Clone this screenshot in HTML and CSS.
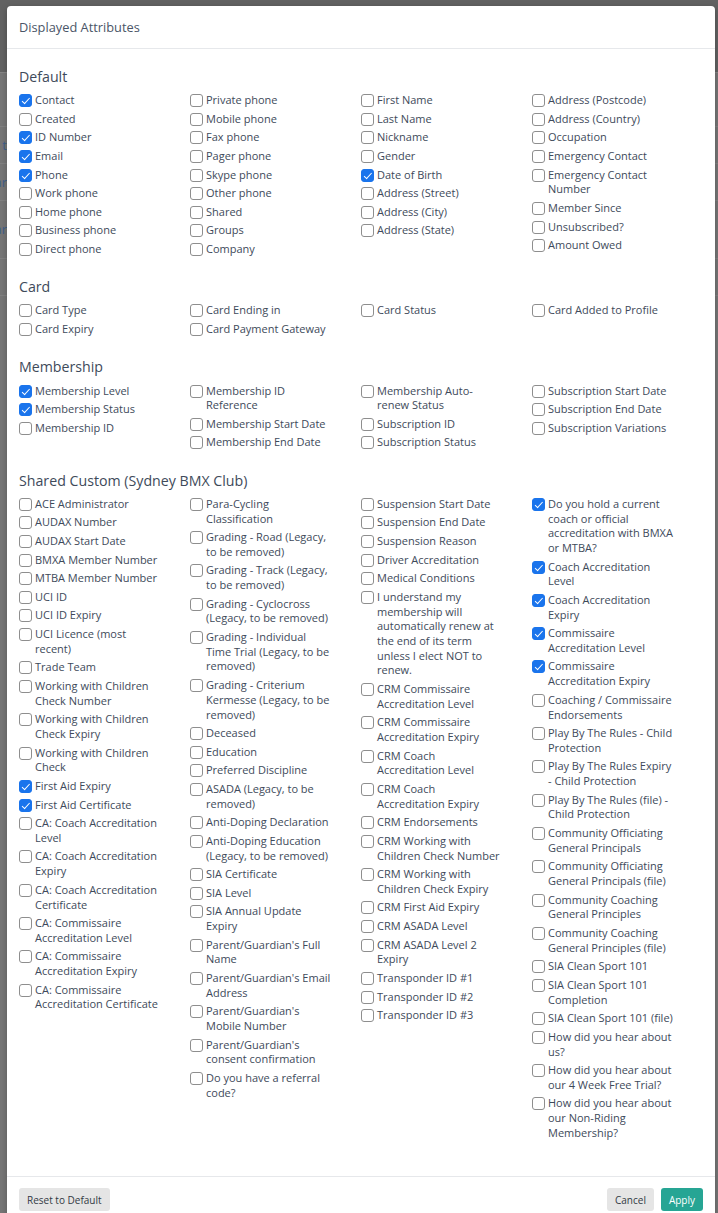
FILE: index.html
```html
<!DOCTYPE html>
<html>
<head>
<meta charset="utf-8">
<title>Displayed Attributes</title>
<link rel="stylesheet" href="styles.css">
</head>
<body>
<div class="page">
  <div class="page-top"></div>
  <div class="page-row page-row-tall"></div>
  <div class="page-row"><span class="page-link">t</span></div>
  <div class="page-row"><span class="page-link">ar</span></div>
  <div class="page-row page-row-big"><span class="page-link">ar</span></div>
  <div class="page-row"></div>
</div>

<div class="modal">
  <div class="modal-header">Displayed Attributes</div>
  <div class="modal-body">

    <section class="group">
      <h3 class="group-title">Default</h3>
      <div class="cols">
        <div class="col">
          <label class="item"><input type="checkbox" checked><span>Contact</span></label>
          <label class="item"><input type="checkbox"><span>Created</span></label>
          <label class="item"><input type="checkbox" checked><span>ID Number</span></label>
          <label class="item"><input type="checkbox" checked><span>Email</span></label>
          <label class="item"><input type="checkbox" checked><span>Phone</span></label>
          <label class="item"><input type="checkbox"><span>Work phone</span></label>
          <label class="item"><input type="checkbox"><span>Home phone</span></label>
          <label class="item"><input type="checkbox"><span>Business phone</span></label>
          <label class="item"><input type="checkbox"><span>Direct phone</span></label>
        </div>
        <div class="col">
          <label class="item"><input type="checkbox"><span>Private phone</span></label>
          <label class="item"><input type="checkbox"><span>Mobile phone</span></label>
          <label class="item"><input type="checkbox"><span>Fax phone</span></label>
          <label class="item"><input type="checkbox"><span>Pager phone</span></label>
          <label class="item"><input type="checkbox"><span>Skype phone</span></label>
          <label class="item"><input type="checkbox"><span>Other phone</span></label>
          <label class="item"><input type="checkbox"><span>Shared</span></label>
          <label class="item"><input type="checkbox"><span>Groups</span></label>
          <label class="item"><input type="checkbox"><span>Company</span></label>
        </div>
        <div class="col">
          <label class="item"><input type="checkbox"><span>First Name</span></label>
          <label class="item"><input type="checkbox"><span>Last Name</span></label>
          <label class="item"><input type="checkbox"><span>Nickname</span></label>
          <label class="item"><input type="checkbox"><span>Gender</span></label>
          <label class="item"><input type="checkbox" checked><span>Date of Birth</span></label>
          <label class="item"><input type="checkbox"><span>Address (Street)</span></label>
          <label class="item"><input type="checkbox"><span>Address (City)</span></label>
          <label class="item"><input type="checkbox"><span>Address (State)</span></label>
        </div>
        <div class="col">
          <label class="item"><input type="checkbox"><span>Address (Postcode)</span></label>
          <label class="item"><input type="checkbox"><span>Address (Country)</span></label>
          <label class="item"><input type="checkbox"><span>Occupation</span></label>
          <label class="item"><input type="checkbox"><span>Emergency Contact</span></label>
          <label class="item"><input type="checkbox"><span>Emergency Contact Number</span></label>
          <label class="item"><input type="checkbox"><span>Member Since</span></label>
          <label class="item"><input type="checkbox"><span>Unsubscribed?</span></label>
          <label class="item"><input type="checkbox"><span>Amount Owed</span></label>
        </div>
      </div>
    </section>

    <section class="group">
      <h3 class="group-title">Card</h3>
      <div class="cols">
        <div class="col">
          <label class="item"><input type="checkbox"><span>Card Type</span></label>
          <label class="item"><input type="checkbox"><span>Card Expiry</span></label>
        </div>
        <div class="col">
          <label class="item"><input type="checkbox"><span>Card Ending in</span></label>
          <label class="item"><input type="checkbox"><span>Card Payment Gateway</span></label>
        </div>
        <div class="col">
          <label class="item"><input type="checkbox"><span>Card Status</span></label>
        </div>
        <div class="col">
          <label class="item"><input type="checkbox"><span>Card Added to Profile</span></label>
        </div>
      </div>
    </section>

    <section class="group">
      <h3 class="group-title">Membership</h3>
      <div class="cols">
        <div class="col">
          <label class="item"><input type="checkbox" checked><span>Membership Level</span></label>
          <label class="item"><input type="checkbox" checked><span>Membership Status</span></label>
          <label class="item"><input type="checkbox"><span>Membership ID</span></label>
        </div>
        <div class="col">
          <label class="item"><input type="checkbox"><span>Membership ID Reference</span></label>
          <label class="item"><input type="checkbox"><span>Membership Start Date</span></label>
          <label class="item"><input type="checkbox"><span>Membership End Date</span></label>
        </div>
        <div class="col">
          <label class="item"><input type="checkbox"><span>Membership Auto-renew Status</span></label>
          <label class="item"><input type="checkbox"><span>Subscription ID</span></label>
          <label class="item"><input type="checkbox"><span>Subscription Status</span></label>
        </div>
        <div class="col">
          <label class="item"><input type="checkbox"><span>Subscription Start Date</span></label>
          <label class="item"><input type="checkbox"><span>Subscription End Date</span></label>
          <label class="item"><input type="checkbox"><span>Subscription Variations</span></label>
        </div>
      </div>
    </section>

    <section class="group">
      <h3 class="group-title">Shared Custom (Sydney BMX Club)</h3>
      <div class="cols">
        <div class="col">
          <label class="item"><input type="checkbox"><span>ACE Administrator</span></label>
          <label class="item"><input type="checkbox"><span>AUDAX Number</span></label>
          <label class="item"><input type="checkbox"><span>AUDAX Start Date</span></label>
          <label class="item"><input type="checkbox"><span>BMXA Member Number</span></label>
          <label class="item"><input type="checkbox"><span>MTBA Member Number</span></label>
          <label class="item"><input type="checkbox"><span>UCI ID</span></label>
          <label class="item"><input type="checkbox"><span>UCI ID Expiry</span></label>
          <label class="item"><input type="checkbox"><span>UCI Licence (most recent)</span></label>
          <label class="item"><input type="checkbox"><span>Trade Team</span></label>
          <label class="item"><input type="checkbox"><span>Working with Children Check Number</span></label>
          <label class="item"><input type="checkbox"><span>Working with Children Check Expiry</span></label>
          <label class="item"><input type="checkbox"><span>Working with Children Check</span></label>
          <label class="item"><input type="checkbox" checked><span>First Aid Expiry</span></label>
          <label class="item"><input type="checkbox" checked><span>First Aid Certificate</span></label>
          <label class="item"><input type="checkbox"><span>CA: Coach Accreditation Level</span></label>
          <label class="item"><input type="checkbox"><span>CA: Coach Accreditation Expiry</span></label>
          <label class="item"><input type="checkbox"><span>CA: Coach Accreditation Certificate</span></label>
          <label class="item"><input type="checkbox"><span>CA: Commissaire Accreditation Level</span></label>
          <label class="item"><input type="checkbox"><span>CA: Commissaire Accreditation Expiry</span></label>
          <label class="item"><input type="checkbox"><span>CA: Commissaire Accreditation Certificate</span></label>
        </div>
        <div class="col">
          <label class="item"><input type="checkbox"><span>Para-Cycling Classification</span></label>
          <label class="item"><input type="checkbox"><span>Grading - Road (Legacy, to be removed)</span></label>
          <label class="item"><input type="checkbox"><span>Grading - Track (Legacy, to be removed)</span></label>
          <label class="item"><input type="checkbox"><span>Grading - Cyclocross (Legacy, to be removed)</span></label>
          <label class="item"><input type="checkbox"><span>Grading - Individual Time Trial (Legacy, to be removed)</span></label>
          <label class="item"><input type="checkbox"><span>Grading - Criterium Kermesse (Legacy, to be removed)</span></label>
          <label class="item"><input type="checkbox"><span>Deceased</span></label>
          <label class="item"><input type="checkbox"><span>Education</span></label>
          <label class="item"><input type="checkbox"><span>Preferred Discipline</span></label>
          <label class="item"><input type="checkbox"><span>ASADA (Legacy, to be removed)</span></label>
          <label class="item"><input type="checkbox"><span>Anti-Doping Declaration</span></label>
          <label class="item"><input type="checkbox"><span>Anti-Doping Education (Legacy, to be removed)</span></label>
          <label class="item"><input type="checkbox"><span>SIA Certificate</span></label>
          <label class="item"><input type="checkbox"><span>SIA Level</span></label>
          <label class="item"><input type="checkbox"><span>SIA Annual Update Expiry</span></label>
          <label class="item"><input type="checkbox"><span>Parent/Guardian's Full Name</span></label>
          <label class="item"><input type="checkbox"><span>Parent/Guardian's Email Address</span></label>
          <label class="item"><input type="checkbox"><span>Parent/Guardian's Mobile Number</span></label>
          <label class="item"><input type="checkbox"><span>Parent/Guardian's consent confirmation</span></label>
          <label class="item"><input type="checkbox"><span>Do you have a referral code?</span></label>
        </div>
        <div class="col">
          <label class="item"><input type="checkbox"><span>Suspension Start Date</span></label>
          <label class="item"><input type="checkbox"><span>Suspension End Date</span></label>
          <label class="item"><input type="checkbox"><span>Suspension Reason</span></label>
          <label class="item"><input type="checkbox"><span>Driver Accreditation</span></label>
          <label class="item"><input type="checkbox"><span>Medical Conditions</span></label>
          <label class="item"><input type="checkbox"><span>I understand my membership will automatically renew at the end of its term unless I elect NOT to renew.</span></label>
          <label class="item"><input type="checkbox"><span>CRM Commissaire Accreditation Level</span></label>
          <label class="item"><input type="checkbox"><span>CRM Commissaire Accreditation Expiry</span></label>
          <label class="item"><input type="checkbox"><span>CRM Coach Accreditation Level</span></label>
          <label class="item"><input type="checkbox"><span>CRM Coach Accreditation Expiry</span></label>
          <label class="item"><input type="checkbox"><span>CRM Endorsements</span></label>
          <label class="item"><input type="checkbox"><span>CRM Working with Children Check Number</span></label>
          <label class="item"><input type="checkbox"><span>CRM Working with Children Check Expiry</span></label>
          <label class="item"><input type="checkbox"><span>CRM First Aid Expiry</span></label>
          <label class="item"><input type="checkbox"><span>CRM ASADA Level</span></label>
          <label class="item"><input type="checkbox"><span>CRM ASADA Level 2 Expiry</span></label>
          <label class="item"><input type="checkbox"><span>Transponder ID #1</span></label>
          <label class="item"><input type="checkbox"><span>Transponder ID #2</span></label>
          <label class="item"><input type="checkbox"><span>Transponder ID #3</span></label>
        </div>
        <div class="col">
          <label class="item"><input type="checkbox" checked><span>Do you hold a current coach or official accreditation with BMXA or MTBA?</span></label>
          <label class="item"><input type="checkbox" checked><span>Coach Accreditation Level</span></label>
          <label class="item"><input type="checkbox" checked><span>Coach Accreditation Expiry</span></label>
          <label class="item"><input type="checkbox" checked><span>Commissaire Accreditation Level</span></label>
          <label class="item"><input type="checkbox" checked><span>Commissaire Accreditation Expiry</span></label>
          <label class="item"><input type="checkbox"><span>Coaching / Commissaire Endorsements</span></label>
          <label class="item"><input type="checkbox"><span>Play By The Rules - Child Protection</span></label>
          <label class="item"><input type="checkbox"><span>Play By The Rules Expiry - Child Protection</span></label>
          <label class="item"><input type="checkbox"><span>Play By The Rules (file) - Child Protection</span></label>
          <label class="item"><input type="checkbox"><span>Community Officiating General Principals</span></label>
          <label class="item"><input type="checkbox"><span>Community Officiating General Principals (file)</span></label>
          <label class="item"><input type="checkbox"><span>Community Coaching General Principles</span></label>
          <label class="item"><input type="checkbox"><span>Community Coaching General Principles (file)</span></label>
          <label class="item"><input type="checkbox"><span>SIA Clean Sport 101</span></label>
          <label class="item"><input type="checkbox"><span>SIA Clean Sport 101 Completion</span></label>
          <label class="item"><input type="checkbox"><span>SIA Clean Sport 101 (file)</span></label>
          <label class="item"><input type="checkbox"><span>How did you hear about us?</span></label>
          <label class="item"><input type="checkbox"><span>How did you hear about our 4 Week Free Trial?</span></label>
          <label class="item"><input type="checkbox"><span>How did you hear about our Non-Riding Membership?</span></label>
        </div>
      </div>
    </section>

  </div>
  <div class="modal-footer">
    <button class="btn btn-light" type="button">Reset to Default</button>
    <div class="footer-right">
      <button class="btn btn-light" type="button">Cancel</button>
      <button class="btn btn-primary" type="button">Apply</button>
    </div>
  </div>
</div>
</body>
</html>
```

FILE: styles.css
```css
html, body {
  margin: 0;
  padding: 0;
  height: 100%;
  overflow: hidden;
}

body {
  background: #767676;
  font-family: "Open Sans", "Liberation Sans", sans-serif;
  position: relative;
}

.page {
  height: 100%;
}

.page-top {
  height: 72px;
  background: #626262;
  border-bottom: 1px solid #858585;
}

.page-row {
  height: 36px;
  border-bottom: 1px solid #818181;
  font-size: 13px;
  color: #3f5f8a;
  line-height: 36px;
}

.page-row-tall {
  height: 53px;
}

.page-row-big {
  height: 57px;
  line-height: 57px;
}

.page-link {
  display: block;
  text-align: right;
  width: 7px;
  overflow: hidden;
  white-space: nowrap;
  direction: rtl;
}

.modal {
  position: absolute;
  top: 6px;
  left: 7px;
  width: 708px;
  background: #ffffff;
  border-radius: 4px;
  box-shadow: 0 2px 6px rgba(0, 0, 0, 0.25);
  color: #3e4a5a;
}

.modal-header {
  height: 43px;
  box-sizing: border-box;
  padding: 0 12px;
  display: flex;
  align-items: center;
  font-size: 12.8px;
  color: #4a5567;
  border-bottom: 1px solid #e6e8eb;
}

.modal-body {
  padding: 18px 12px 32px;
}

.group {
  margin-bottom: 16.6px;
}

.group:last-child {
  margin-bottom: 0;
}

.group-title {
  margin: 0 0 7px;
  font-size: 14.2px;
  font-weight: 400;
  line-height: 19.2px;
  color: #3e4a5a;
}

.cols {
  display: grid;
  grid-template-columns: repeat(4, 171px);
}

.col {
  display: flex;
  flex-direction: column;
  padding-right: 28.5px;
}

.item {
  display: flex;
  align-items: flex-start;
  gap: 3px;
  margin-bottom: 3.92px;
  font-size: 11px;
  line-height: 14.7px;
  color: #3e4a5a;
}

.item input {
  flex: none;
  appearance: none;
  -webkit-appearance: none;
  box-sizing: border-box;
  width: 13px;
  height: 13px;
  margin: 1px 0 0;
  border: 1px solid #8e8e8e;
  border-radius: 3px;
  background: #ffffff;
  position: relative;
}

.item input:checked {
  background: #1a74ec;
  border-color: #1a74ec;
}

.item input:checked::after {
  content: "";
  position: absolute;
  left: 3.5px;
  top: 1px;
  width: 3px;
  height: 6.5px;
  border: solid #ffffff;
  border-width: 0 1.6px 1.6px 0;
  transform: rotate(42deg);
}

.modal-footer {
  border-top: 1px solid #e6e8eb;
  padding: 11px 12px 12px;
  display: flex;
  justify-content: space-between;
  align-items: center;
}

.footer-right {
  display: flex;
  gap: 7px;
}

.btn {
  height: 23px;
  padding: 0 8px;
  border: none;
  border-radius: 3px;
  font-family: "Open Sans", "Liberation Sans", sans-serif;
  font-size: 10px;
}

.btn-light {
  background: #e5e5e5;
  color: #333a44;
}

.btn-primary {
  background: #26a594;
  color: #ffffff;
}
```
